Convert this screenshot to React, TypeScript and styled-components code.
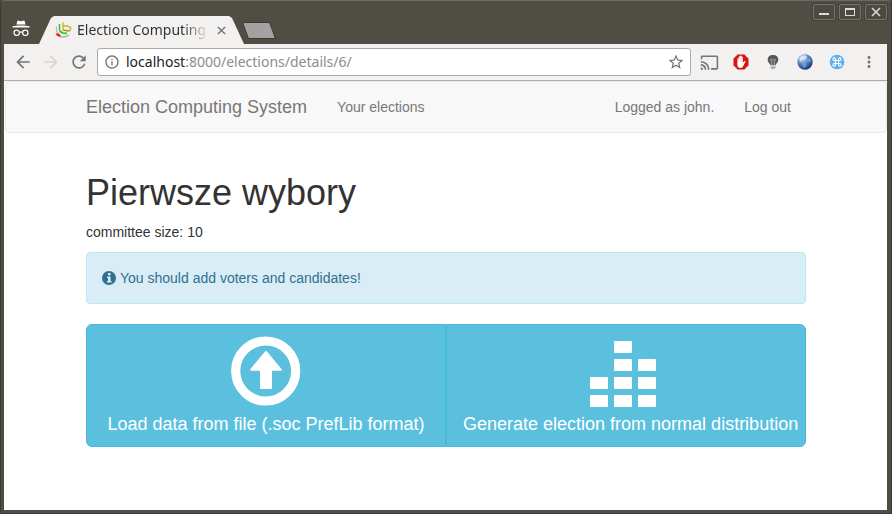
import React from "react";
import styled, { createGlobalStyle } from "styled-components";
import {
  MdArrowBack,
  MdArrowForward,
  MdCast,
  MdInfoOutline,
  MdMoreVert,
  MdRefresh,
  MdStarBorder,
} from "react-icons/md";

const GlobalStyle = createGlobalStyle`
  *, *::before, *::after { box-sizing: border-box; }
  html, body, #root { height: 100%; }
  body {
    margin: 0;
    background: #4c4a42;
    color: #333;
    font: 14px/20px "Liberation Sans", Arial, sans-serif;
  }
  svg { display: block; flex: none; }
  button { font: inherit; cursor: pointer; }
`;

const Window = styled.div`
  display: flex;
  flex-direction: column;
  min-height: 100%;
  border: 1px solid #3b3a35;
  border-top-color: #6b6963;
  border-radius: 5px 5px 0 0;
  padding: 0 4px 3px 3px;
  background: #504d45;
`;

const TitleBar = styled.header`
  display: flex;
  align-items: flex-end;
  height: 43px;
`;

const Incognito = styled.div`
  padding: 0 0 6px 8px;
`;

const Tab = styled.div`
  display: flex;
  align-items: center;
  width: 205px;
  height: 28px;
  margin-left: 9px;
  padding: 0 18px 0 16px;
  background: #f2f1f0;
  clip-path: polygon(0 100%, 12px 2px, 15px 0, 190px 0, 193px 2px, 100% 100%);
`;

const TabTitle = styled.span`
  flex: 1;
  min-width: 0;
  margin-left: 5px;
  white-space: nowrap;
  color: #333;
  font: 14px/20px "Noto Sans", sans-serif;
  mask-image: linear-gradient(to right, #000 80%, transparent);
`;

const TabClose = styled.button`
  display: flex;
  margin-left: 8px;
  padding: 0;
  border: 0;
  background: none;
  color: #777;
`;

const NewTab = styled.button`
  width: 28px;
  height: 17px;
  margin: 0 0 5px 1px;
  padding: 0;
  border: 1px solid #3b3933;
  border-radius: 2px;
  background: #a3a2a0;
  transform: skewX(20deg);
`;

const WindowControls = styled.div`
  display: flex;
  gap: 4px;
  align-self: flex-start;
  margin: 3px 0 0 auto;
`;

const ControlButton = styled.button`
  display: flex;
  align-items: center;
  justify-content: center;
  width: 22px;
  height: 16px;
  padding: 0;
  border: 1px solid #77756e;
  border-radius: 2px;
  background: #4b4941;
  color: #dfdbd2;
  box-shadow: 0 0 0 1px #43413a;
`;

const Toolbar = styled.div`
  display: flex;
  align-items: center;
  height: 37px;
  padding: 0 8px 0 9px;
  border-bottom: 1px solid #aeacb0;
  background: #f2f1f0;
`;

const ToolButton = styled.button<{ $faded?: boolean }>`
  display: flex;
  align-items: center;
  justify-content: center;
  width: 20px;
  height: 20px;
  padding: 0;
  border: 0;
  background: none;
  color: ${({ $faded }) => ($faded ? "#d6d5d4" : "#747474")};
`;

const NavButtons = styled.div`
  display: flex;
  gap: 8px;
`;

const AddressBar = styled.div`
  display: flex;
  flex: 1;
  align-items: center;
  height: 28px;
  margin: 0 8px;
  padding: 0 4px 0 6px;
  border: 1px solid #aaa;
  border-radius: 3px;
  background: #fff;
  color: #747474;
`;

const Address = styled.div`
  flex: 1;
  margin-left: 6px;
  color: #8c8c8c;
  font: 14px/20px "Noto Sans", sans-serif;

  b {
    color: #222;
    font-weight: 400;
  }
`;

const Extensions = styled.div`
  display: flex;
  gap: 12px;
`;

const Page = styled.div`
  flex: 1;
  border-left: 1px solid #fff;
  background: #fff;
`;

const Navbar = styled.nav`
  margin-bottom: 20px;
  border: 1px solid #e7e7e7;
  border-radius: 4px;
  background: #f8f8f8;
`;

const Container = styled.div`
  width: 100%;
  max-width: 750px;
  margin: 0 auto;
  padding: 0 15px;
`;

const NavRow = styled(Container)`
  display: flex;
  align-items: center;
  height: 50px;
`;

const Brand = styled.a`
  margin-right: 15px;
  color: #777;
  font-size: 18px;
  text-decoration: none;
`;

const NavItem = styled.a`
  padding: 15px;
  color: #777;
  text-decoration: none;
`;

const NavText = styled.span`
  margin-left: auto;
  padding: 15px;
  color: #777;
`;

const Title = styled.h1`
  margin: 0 0 10px;
  padding-top: 20px;
  font-size: 36px;
  font-weight: 400;
  line-height: 39px;
`;

const Detail = styled.p`
  margin: 0 0 10px;
`;

const Alert = styled.div`
  display: flex;
  align-items: center;
  gap: 4px;
  margin-bottom: 20px;
  padding: 15px;
  border: 1px solid #bce8f1;
  border-radius: 4px;
  background: #d9edf7;
  color: #31708f;
`;

const ActionGroup = styled.div`
  display: flex;
`;

const ActionButton = styled.button`
  display: block;
  width: 50%;
  padding: 10px 16px;
  border: 1px solid #46b8da;
  background: #5bc0de;
  color: #fff;
  font-size: 18px;
  line-height: 24px;
  text-align: center;
  white-space: nowrap;

  svg { margin: 0 auto 5px; }

  &:first-child { border-radius: 6px 0 0 6px; }
  &:last-child { border-radius: 0 6px 6px 0; }
`;

const ActionLabel = styled.span`
  display: block;
`;

const IncognitoIcon = () => (
  <svg width="18" height="18" viewBox="0 0 18 18" fill="#fff">
    <path d="M5.3 1.2C5.5.6 6 .5 6.600.7L9 1.300 11.400.7C12 .5 12.500.6 12.700 1.200L13.600 4.500H4.400Z" />
    <path d="M.5 6.200C5 5.200 13 5.200 17.500 6.200V7.600H.5Z" />
    <g fill="none" stroke="#fff" strokeWidth="1.200">
      <circle cx="4.700" cy="12.800" r="2.700" />
      <circle cx="13.300" cy="12.800" r="2.700" />
      <path d="M7.400 12.400Q9 11.200 10.600 12.400" />
    </g>
  </svg>
);

const Favicon = () => (
  <svg width="17" height="16" viewBox="0 0 17 16" fill="none">
    <path d="M1.500 4.500V8Q1.500 10.800 4 12" stroke="#b9b9b9" strokeWidth="1.300" />
    <path d="M.5 11.500L4 11.800 6.500 14.500Q2.500 15.500 .5 11.500Z" fill="#e51a1a" />
    <path d="M5 14.800Q10 15.800 14 13" stroke="#a9a9a9" strokeWidth="1.300" />
    <path d="M4.500 2V7Q4.500 10.500 8 11.200L11.500 11.500" stroke="#54ad51" strokeWidth="1.500" />
    <path d="M5.500 9.500Q8 12 12 11.200" stroke="#30df28" strokeWidth="1.800" />
    <path d="M8 .5V8L14 8.800Q15.700 8.500 15.700 5.500L11.500 3.800L8.500 4" stroke="#c5bd22" strokeWidth="1.500" />
    <path d="M8.500 8.500L14.500 9" stroke="#8e8a38" strokeWidth="1" />
  </svg>
);

const CloseIcon = ({ size, width }: { size: number; width: number }) => (
  <svg width={size} height={size} viewBox="0 0 10 10" fill="none" stroke="currentColor" strokeWidth={width}>
    <path d="M1 1L9 9M9 1L1 9" />
  </svg>
);

const MinimizeIcon = () => (
  <svg width="10" height="10" viewBox="0 0 10 10">
    <rect y="6" width="10" height="2" fill="currentColor" />
  </svg>
);

const MaximizeIcon = () => (
  <svg width="10" height="10" viewBox="0 0 10 10" fill="currentColor">
    <path fillRule="evenodd" d="M0 1H10V9H0ZM1 3V8H9V3Z" />
  </svg>
);

const AdblockIcon = () => (
  <svg width="16" height="16" viewBox="0 0 16 16">
    <path d="M4.700.5H11.300L15.500 4.700V11.300L11.300 15.500H4.700L.5 11.300V4.700Z" fill="#dc1212" stroke="#c98686" strokeWidth=".7" />
    <path
      d="M4.400 8V5Q4.400 4.200 5 4.200T5.700 5V3Q5.700 2.300 6.400 2.300T7.100 3V2.100Q7.100 1.400 7.800 1.400T8.500 2.100V3Q8.500 2.400 9.100 2.400T9.800 3V8.500L11.300 7.200Q12.300 6.700 12.600 7.400L10.500 11.500Q9.500 14 7.500 14 4.400 14 4.400 10.500Z"
      fill="#fff"
    />
    <path d="M5.700 4.500V7.500M7.100 3V7.300M8.500 3.200V7.400" stroke="#d9b3b3" strokeWidth=".4" />
  </svg>
);

const BulbIcon = () => (
  <svg width="16" height="16" viewBox="0 0 16 16">
    <path d="M8 1C4.700 1 2.700 3 2.700 5.700 2.700 8.300 4.800 9.300 5.300 11H10.700C11.200 9.300 13.300 8.300 13.300 5.700 13.300 3 11.300 1 8 1Z" fill="#595959" />
    <path d="M6.700 11V7.200Q5.300 7 5.500 5.700 6.500 4.700 7.300 6 8 4.800 8.800 6 9.800 4.700 10.500 5.700 10.600 7 9.300 7.200V11" fill="none" stroke="#bdbdbd" strokeWidth=".8" />
    <path d="M5.500 11.500H10.500V13.500L9.500 15H6.500L5.500 13.500Z" fill="#a8a8a8" />
    <path d="M5.500 12.700H10.500" stroke="#ddd" strokeWidth=".7" />
  </svg>
);

const GlobeIcon = () => (
  <svg width="16" height="16" viewBox="0 0 16 16">
    <defs>
      <radialGradient id="globe" cx=".35" cy=".25" r=".8">
        <stop offset="0" stopColor="#d5e4f8" />
        <stop offset=".5" stopColor="#5485c5" />
        <stop offset="1" stopColor="#12306c" />
      </radialGradient>
    </defs>
    <circle cx="8" cy="8" r="7.700" fill="url(#globe)" />
    <path d="M2 5Q4 1.500 8 1.300L10 3 7.500 5.500 5 5.600 3.500 8Z" fill="#e4eefb" opacity=".75" />
    <path d="M5 9L9 9.500 9.500 12 7 14.500Q5.500 12 5 9ZM11.500 4L14.500 6 13 8.500 11 7Z" fill="#7fa7d8" opacity=".7" />
  </svg>
);

const CommandIcon = () => (
  <svg width="16" height="16" viewBox="0 0 16 16">
    <circle cx="8" cy="8" r="7.300" fill="#5eb0ef" />
    <path
      d="M6.500 6.500H5.300A1.300 1.300 0 1 1 6.500 5.200V10.800A1.300 1.300 0 1 1 5.200 9.500H10.800A1.300 1.300 0 1 1 9.500 10.800V5.200A1.300 1.300 0 1 1 10.800 6.500H6.500"
      fill="none"
      stroke="#fff"
      strokeWidth="1.100"
    />
  </svg>
);

const InfoSign = () => (
  <svg width="14" height="14" viewBox="0 0 14 14">
    <circle cx="7" cy="7" r="7" fill="#31708f" />
    <path d="M6 2H8.500V4.200H6ZM5 5.500H8.500V10H9.500V11.500H5V10H6V7H5Z" fill="#d9edf7" />
  </svg>
);

const UploadIcon = () => (
  <svg width="72" height="72" viewBox="0 0 72 72">
    <circle cx="35.700" cy="36" r="30" fill="none" stroke="#fff" strokeWidth="9.200" />
    <path
      d="M35 16.500Q36 15.500 37 16.500L51.500 34Q52.500 35.700 51 35.700H42V53Q42 54 41 54H31Q30 54 30 53V35.700H21Q19.500 35.700 20.500 34Z"
      fill="#fff"
    />
  </svg>
);

const columns = [2, 4, 3];

const EqualizerIcon = () => (
  <svg width="72" height="72" viewBox="0 0 72 72" fill="#fff">
    {columns.map((count, column) =>
      Array.from({ length: count }, (_, row) => (
        <rect key={`${column}-${row}`} x={column * 24} y={60 - row * 18} width="18" height="12" rx="1" />
      )),
    )}
  </svg>
);

export default function App() {
  return (
    <>
      <GlobalStyle />
      <Window>
        <TitleBar>
          <Incognito>
            <IncognitoIcon />
          </Incognito>
          <Tab>
            <Favicon />
            <TabTitle>Election Computing</TabTitle>
            <TabClose aria-label="Close tab">
              <CloseIcon size={9} width={1.6} />
            </TabClose>
          </Tab>
          <NewTab aria-label="New tab" />
          <WindowControls>
            <ControlButton aria-label="Minimize">
              <MinimizeIcon />
            </ControlButton>
            <ControlButton aria-label="Maximize">
              <MaximizeIcon />
            </ControlButton>
            <ControlButton aria-label="Close">
              <CloseIcon size={10} width={1.6} />
            </ControlButton>
          </WindowControls>
        </TitleBar>
        <Toolbar>
          <NavButtons>
            <ToolButton aria-label="Back">
              <MdArrowBack size={20} />
            </ToolButton>
            <ToolButton aria-label="Forward" $faded>
              <MdArrowForward size={20} />
            </ToolButton>
            <ToolButton aria-label="Reload">
              <MdRefresh size={20} />
            </ToolButton>
          </NavButtons>
          <AddressBar>
            <MdInfoOutline size={16} />
            <Address>
              <b>localhost</b>:8000/elections/details/6/
            </Address>
            <ToolButton aria-label="Bookmark">
              <MdStarBorder size={18} />
            </ToolButton>
          </AddressBar>
          <Extensions>
            <ToolButton aria-label="Cast">
              <MdCast size={19} />
            </ToolButton>
            <ToolButton aria-label="Ad blocker">
              <AdblockIcon />
            </ToolButton>
            <ToolButton aria-label="Lights">
              <BulbIcon />
            </ToolButton>
            <ToolButton aria-label="Globe">
              <GlobeIcon />
            </ToolButton>
            <ToolButton aria-label="Shortcuts">
              <CommandIcon />
            </ToolButton>
            <ToolButton aria-label="Menu">
              <MdMoreVert size={18} />
            </ToolButton>
          </Extensions>
        </Toolbar>
        <Page>
          <Navbar>
            <NavRow>
              <Brand href="#">Election Computing System</Brand>
              <NavItem href="#">Your elections</NavItem>
              <NavText>Logged as john.</NavText>
              <NavItem href="#">Log out</NavItem>
            </NavRow>
          </Navbar>
          <Container as="main">
            <Title>Pierwsze wybory</Title>
            <Detail>committee size: 10</Detail>
            <Alert role="alert">
              <InfoSign />
              You should add voters and candidates!
            </Alert>
            <ActionGroup>
              <ActionButton>
                <UploadIcon />
                <ActionLabel>Load data from file (.soc PrefLib format)</ActionLabel>
              </ActionButton>
              <ActionButton>
                <EqualizerIcon />
                <ActionLabel>Generate election from normal distribution</ActionLabel>
              </ActionButton>
            </ActionGroup>
          </Container>
        </Page>
      </Window>
    </>
  );
}
